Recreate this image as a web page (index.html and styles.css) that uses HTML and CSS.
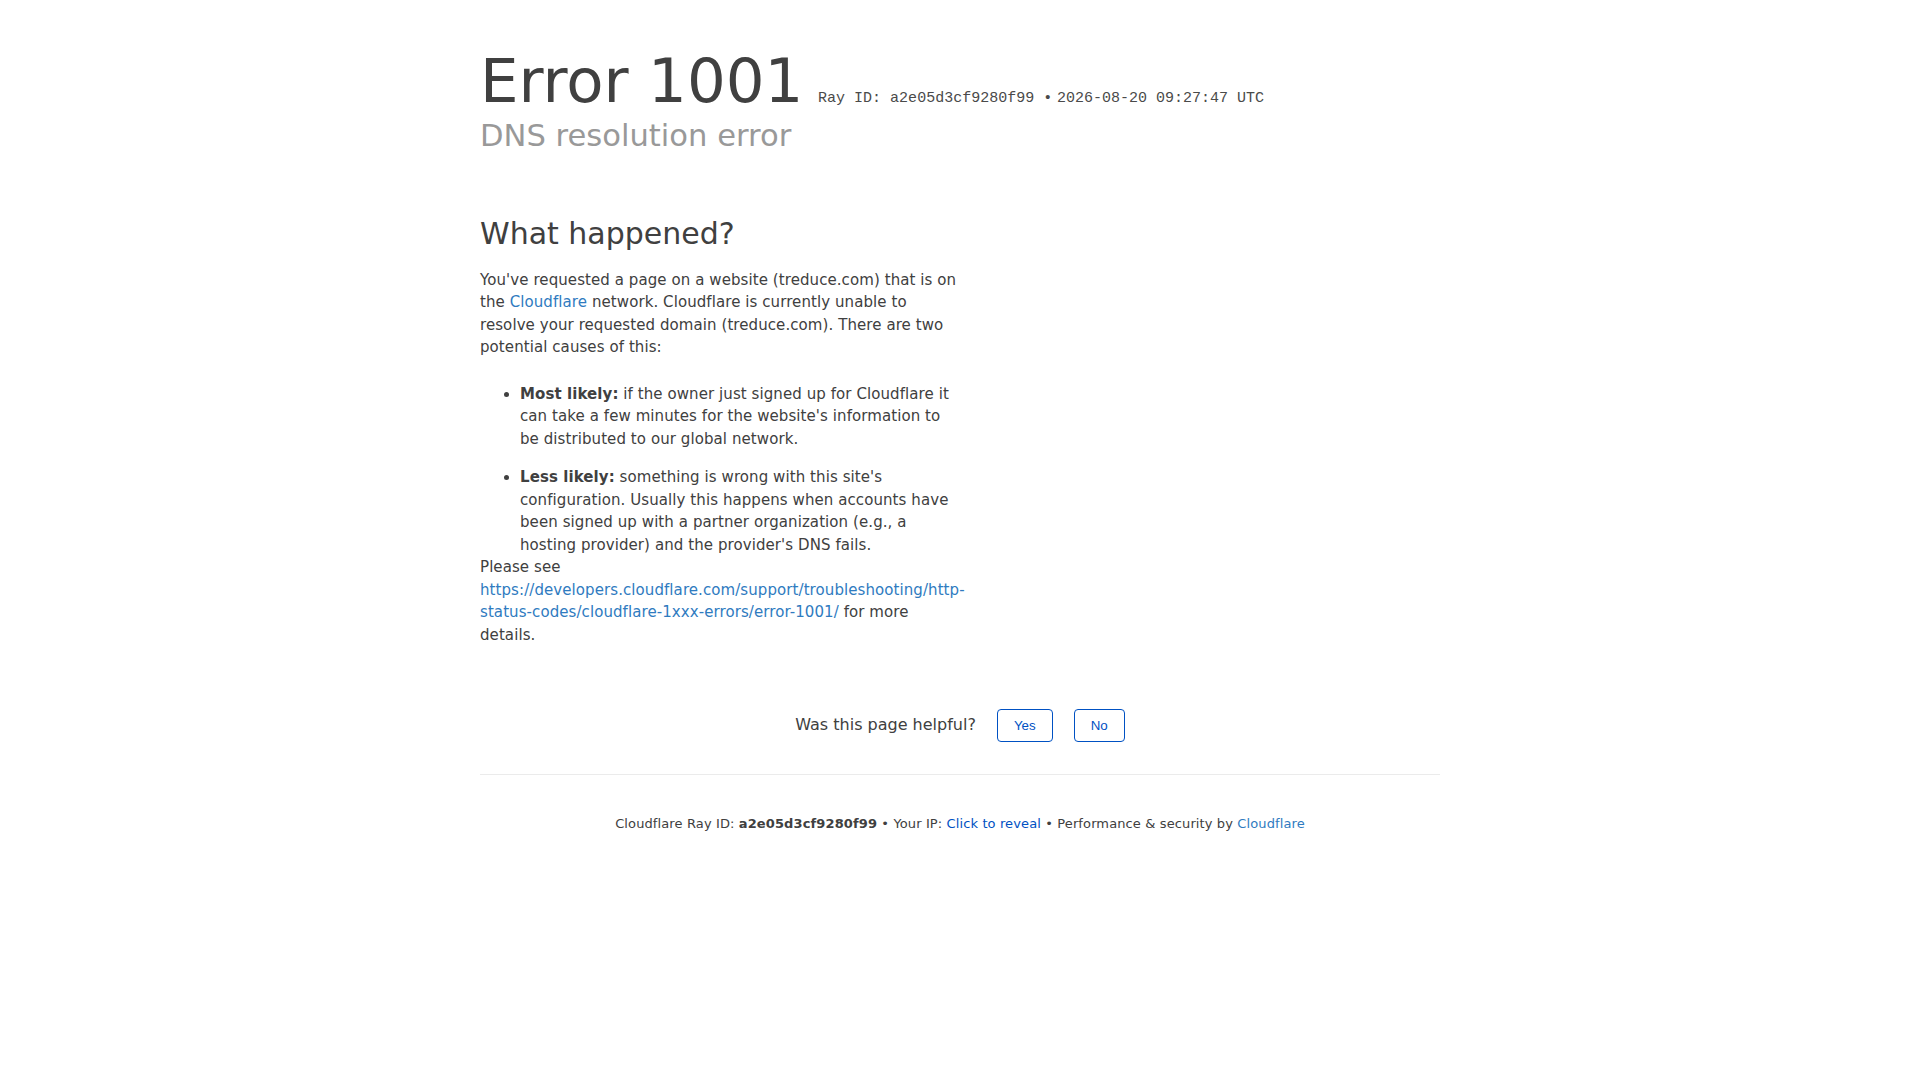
FILE: index.html
```html
<!DOCTYPE html>
<html lang="en">
<head>
<meta charset="utf-8">
<title>treduce.com | 1001: DNS resolution error</title>
<link rel="stylesheet" href="styles.css">
</head>
<body>
<div class="wrapper">
  <header class="header">
    <h1 class="title"><span>Error</span> <span>1001</span></h1>
    <span class="ray-id">Ray ID: a2e05d3cf9280f99 &bull;</span>
    <span class="ray-id">2026-08-20 09:27:47 UTC</span>
    <h2 class="subtitle">DNS resolution error</h2>
  </header>
  <section class="content">
    <div class="column">
      <h2 class="section-title">What happened?</h2>
      <p class="text">You've requested a page on a website (treduce.com) that is on the <a class="link" href="#">Cloudflare</a> network. Cloudflare is currently unable to resolve your requested domain (treduce.com). There are two potential causes of this:</p>
      <ul class="causes">
        <li><span class="strong">Most likely:</span> if the owner just signed up for Cloudflare it can take a few minutes for the website's information to be distributed to our global network.</li>
        <li><span class="strong">Less likely:</span> something is wrong with this site's configuration. Usually this happens when accounts have been signed up with a partner organization (e.g., a hosting provider) and the provider's DNS fails.</li>
      </ul>
      <p class="text">Please see <a class="link" href="#">https://developers.cloudflare.com/support/troubleshooting/http-status-codes/cloudflare-1xxx-errors/error-1001/</a> for more details.</p>
    </div>
  </section>
  <div class="feedback">
    <span class="feedback-label">Was this page helpful?</span>
    <button class="fb-button" type="button">Yes</button>
    <button class="fb-button" type="button">No</button>
  </div>
  <footer class="footer">
    <p class="footer-text">Cloudflare Ray ID: <span class="strong">a2e05d3cf9280f99</span> <span class="sep">&bull;</span> Your IP: <a class="reveal" href="#">Click to reveal</a> <span class="sep">&bull;</span> Performance &amp; security by <a class="link" href="#">Cloudflare</a></p>
  </footer>
</div>
</body>
</html>
```
FILE: styles.css
```css
html, body {
  margin: 0;
  padding: 0;
  background: #ffffff;
}
body {
  font-family: "DejaVu Sans", sans-serif;
  color: #404040;
  font-size: 15px;
  line-height: 22.5px;
}
.wrapper {
  width: 960px;
  margin: 0 auto;
}
.header {
  padding-top: 41px;
  margin-bottom: 60px;
}
.title {
  display: inline-block;
  margin: 4px 10px 0 0;
  font-size: 61px;
  line-height: 71px;
  font-weight: 400;
  color: #404040;
}
.ray-id {
  display: inline-block;
  font-family: Courier, "Courier New", "Liberation Mono", monospace;
  font-size: 15px;
  color: #4a4a4a;
  white-space: nowrap;
}
.subtitle {
  margin: 0;
  font-size: 30.6px;
  line-height: 39px;
  font-weight: 400;
  color: #999999;
}
.content {
  margin-bottom: 31px;
}
.column {
  width: 480px;
  letter-spacing: 0.08px;
}
.section-title {
  margin: 0 0 16px;
  font-size: 30px;
  line-height: 37.5px;
  font-weight: 400;
  letter-spacing: 0;
  color: #404040;
}
.text {
  margin: 0;
}
.link {
  color: #2f7bbf;
  text-decoration: none;
}
.causes {
  margin: 24px 0 0;
  padding-left: 40px;
}
.causes li + li {
  margin-top: 16px;
}
.strong {
  font-weight: 700;
}
.feedback {
  display: flex;
  justify-content: center;
  align-items: center;
  gap: 21px;
  padding: 32px 0;
  font-size: 16px;
}
.fb-button {
  font-family: "Liberation Sans", Arial, sans-serif;
  font-size: 13.33px;
  line-height: 15px;
  padding: 8px 16px;
  background: #ffffff;
  color: #0051c3;
  border: 1px solid #0051c3;
  border-radius: 4px;
  cursor: pointer;
}
.footer {
  border-top: 1px solid #ebebeb;
  padding: 39px 0 40px;
  text-align: center;
}
.footer-text {
  margin: 0;
  font-size: 13px;
  line-height: 19.5px;
  letter-spacing: 0.12px;
}
.reveal {
  color: #0051c3;
  text-decoration: none;
}
```
